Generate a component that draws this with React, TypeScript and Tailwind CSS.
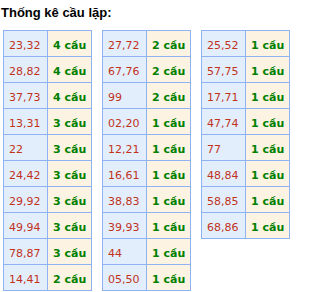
import React from "react";

type Row = [string, number];

const tables: Row[][] = [
  [
    ["23,32", 4],
    ["28,82", 4],
    ["37,73", 4],
    ["13,31", 3],
    ["22", 3],
    ["24,42", 3],
    ["29,92", 3],
    ["49,94", 3],
    ["78,87", 3],
    ["14,41", 2],
  ],
  [
    ["27,72", 2],
    ["67,76", 2],
    ["99", 2],
    ["02,20", 1],
    ["12,21", 1],
    ["16,61", 1],
    ["38,83", 1],
    ["39,93", 1],
    ["44", 1],
    ["05,50", 1],
  ],
  [
    ["25,52", 1],
    ["57,75", 1],
    ["17,71", 1],
    ["47,74", 1],
    ["77", 1],
    ["48,84", 1],
    ["58,85", 1],
    ["68,86", 1],
  ],
];

function StatTable({ rows }: { rows: Row[] }) {
  return (
    <div className="flex flex-col self-start border-l border-t border-[#8fb2f2]">
      {rows.map(([pair, count]) => (
        <div key={pair} className="flex h-[26px]">
          <div className="w-[44px] flex items-center pl-[5px] pt-[3px] bg-[#e3eefd] border-r border-b border-[#8fb2f2] text-[#c0321c]">
            {pair}
          </div>
          <div className="w-[44px] flex items-center pl-[5px] pt-[3px] bg-[#fdf3e2] border-r border-b border-[#8fb2f2] text-[#008000] font-bold">
            {count} cầu
          </div>
        </div>
      ))}
    </div>
  );
}

export default function App() {
  return (
    <div className="w-[318px] h-[292px] bg-white overflow-hidden">
      {/* Title */}
      <div className="h-[30px] pt-[5px] pl-[1px] text-[13px] font-bold text-black font-['Liberation_Sans',Arial,sans-serif] leading-[16px]">
        Thống kê cầu lặp:
      </div>

      {/* Tables */}
      <div className="flex gap-[10px] pl-[3px] text-[11px] leading-none font-['DejaVu_Sans',Verdana,sans-serif]">
        {tables.map((rows, i) => (
          <StatTable key={i} rows={rows} />
        ))}
      </div>
    </div>
  );
}
